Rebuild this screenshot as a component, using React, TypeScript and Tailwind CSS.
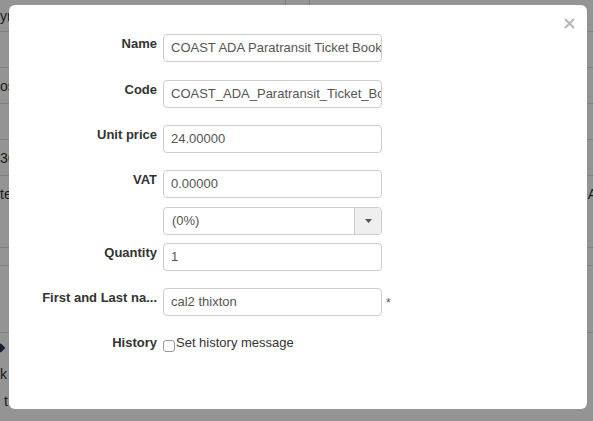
import React from "react"

const font = { fontFamily: '"Liberation Sans", Arial, sans-serif' }

// rows of the product list sitting behind the dialog
function BackgroundTable() {
    return (
        <div className="flex flex-col text-[14px] leading-[20px] text-[#333]">
            <div className="flex h-[32px] items-center border-b border-[#dcdcdc]">
                <span className="w-[285px]">yr</span>
                <div className="h-full w-[25px] border-x border-[#dcdcdc]" />
            </div>
            <div className="h-[36px] border-b border-[#dcdcdc]" />
            <div className="flex h-[36px] items-center border-b border-[#dcdcdc]">
                <span>os</span>
            </div>
            <div className="h-[36px] border-b border-[#dcdcdc]" />
            <div className="flex h-[36px] items-center border-b border-[#dcdcdc]">
                <span>36</span>
            </div>
            <div className="flex h-[72px] items-start justify-between border-b border-[#dcdcdc] pt-[8px]">
                <span>te</span>
                <span className="-mr-[4px]">A</span>
            </div>
            <div className="h-[18px] border-b border-[#dcdcdc]" />
            <div className="h-[67px] border-b border-[#dcdcdc]" />
            <div className="flex flex-col pt-[1px] leading-[27px]">
                <span className="-ml-[4px] text-[12px]">◆</span>
                <span>k</span>
                <span className="pl-[4px]">t</span>
            </div>
        </div>
    )
}

function Label({ children, flush }: { children: React.ReactNode; flush?: boolean }) {
    return (
        <label
            className={`w-[117px] shrink-0 overflow-hidden text-ellipsis whitespace-nowrap text-right text-[13px] font-bold leading-[18px] text-[#333] ${flush ? "" : "pt-[1px]"}`}
        >
            {children}
        </label>
    )
}

function TextBox({ value }: { value: string }) {
    return (
        <div className="ml-[6px] flex h-[28px] w-[219px] items-center overflow-hidden whitespace-nowrap rounded-[4px] border border-[#ccc] pl-[7px] pr-[5px] text-[13px] text-[#555]">
            {value}
        </div>
    )
}

export default function App() {
    return (
        <div className="relative h-[421px] w-[593px] overflow-hidden bg-white" style={font}>
            <BackgroundTable />

            <div className="absolute inset-0 bg-black/[0.42]" />

            <div className="absolute left-[9px] top-[5px] h-[404px] w-[578px] rounded-[6px] bg-white">
                <button className="absolute right-[12px] top-[13px] h-[11px] w-[11px]">
                    <svg viewBox="0 0 11 11" className="h-[11px] w-[11px]">
                        <path d="M1 1 L10 10 M10 1 L1 10" stroke="#b8b8b8" strokeWidth="2.2" />
                    </svg>
                </button>

                <form className="flex flex-col pl-[31px] pt-[29px]">
                    <div className="flex items-start">
                        <Label>Name</Label>
                        <TextBox value="COAST ADA Paratransit Ticket Booklet" />
                    </div>

                    <div className="mt-[18px] flex items-start">
                        <Label>Code</Label>
                        <TextBox value="COAST_ADA_Paratransit_Ticket_Booklet" />
                    </div>

                    <div className="mt-[17px] flex items-start">
                        <Label>Unit price</Label>
                        <TextBox value="24.00000" />
                    </div>

                    <div className="mt-[17px] flex items-start">
                        <Label>VAT</Label>
                        <TextBox value="0.00000" />
                    </div>

                    <div className="mt-[9px] flex items-start">
                        <div className="w-[117px] shrink-0" />
                        <div className="ml-[6px] flex h-[28px] w-[219px] overflow-hidden rounded-[4px] border border-[#ccc] text-[13px] text-[#555]">
                            <div className="flex flex-1 items-center pl-[8px]">(0%)</div>
                            <div className="flex w-[27px] items-center justify-center border-l border-[#ccc] bg-[#efefef]">
                                <svg viewBox="0 0 7 4" className="h-[4px] w-[7px]">
                                    <path d="M0 0 L7 0 L3.5 4 Z" fill="#555" />
                                </svg>
                            </div>
                        </div>
                    </div>

                    <div className="mt-[8px] flex items-start">
                        <Label>Quantity</Label>
                        <TextBox value="1" />
                    </div>

                    <div className="mt-[17px] flex items-start">
                        <Label>First and Last na...</Label>
                        <TextBox value="cal2 thixton" />
                        <span className="ml-[4px] pt-[8px] text-[12px] leading-[14px] text-[#555]">*</span>
                    </div>

                    <div className="mt-[18px] flex items-start">
                        <Label flush>History</Label>
                        <div className="ml-[6px] mt-[6px] h-[12px] w-[12px] shrink-0 rounded-[3px] border border-[#999] bg-white" />
                        <span className="ml-[1px] text-[13px] leading-[18px] text-[#333]">Set history message</span>
                    </div>
                </form>
            </div>
        </div>
    )
}
